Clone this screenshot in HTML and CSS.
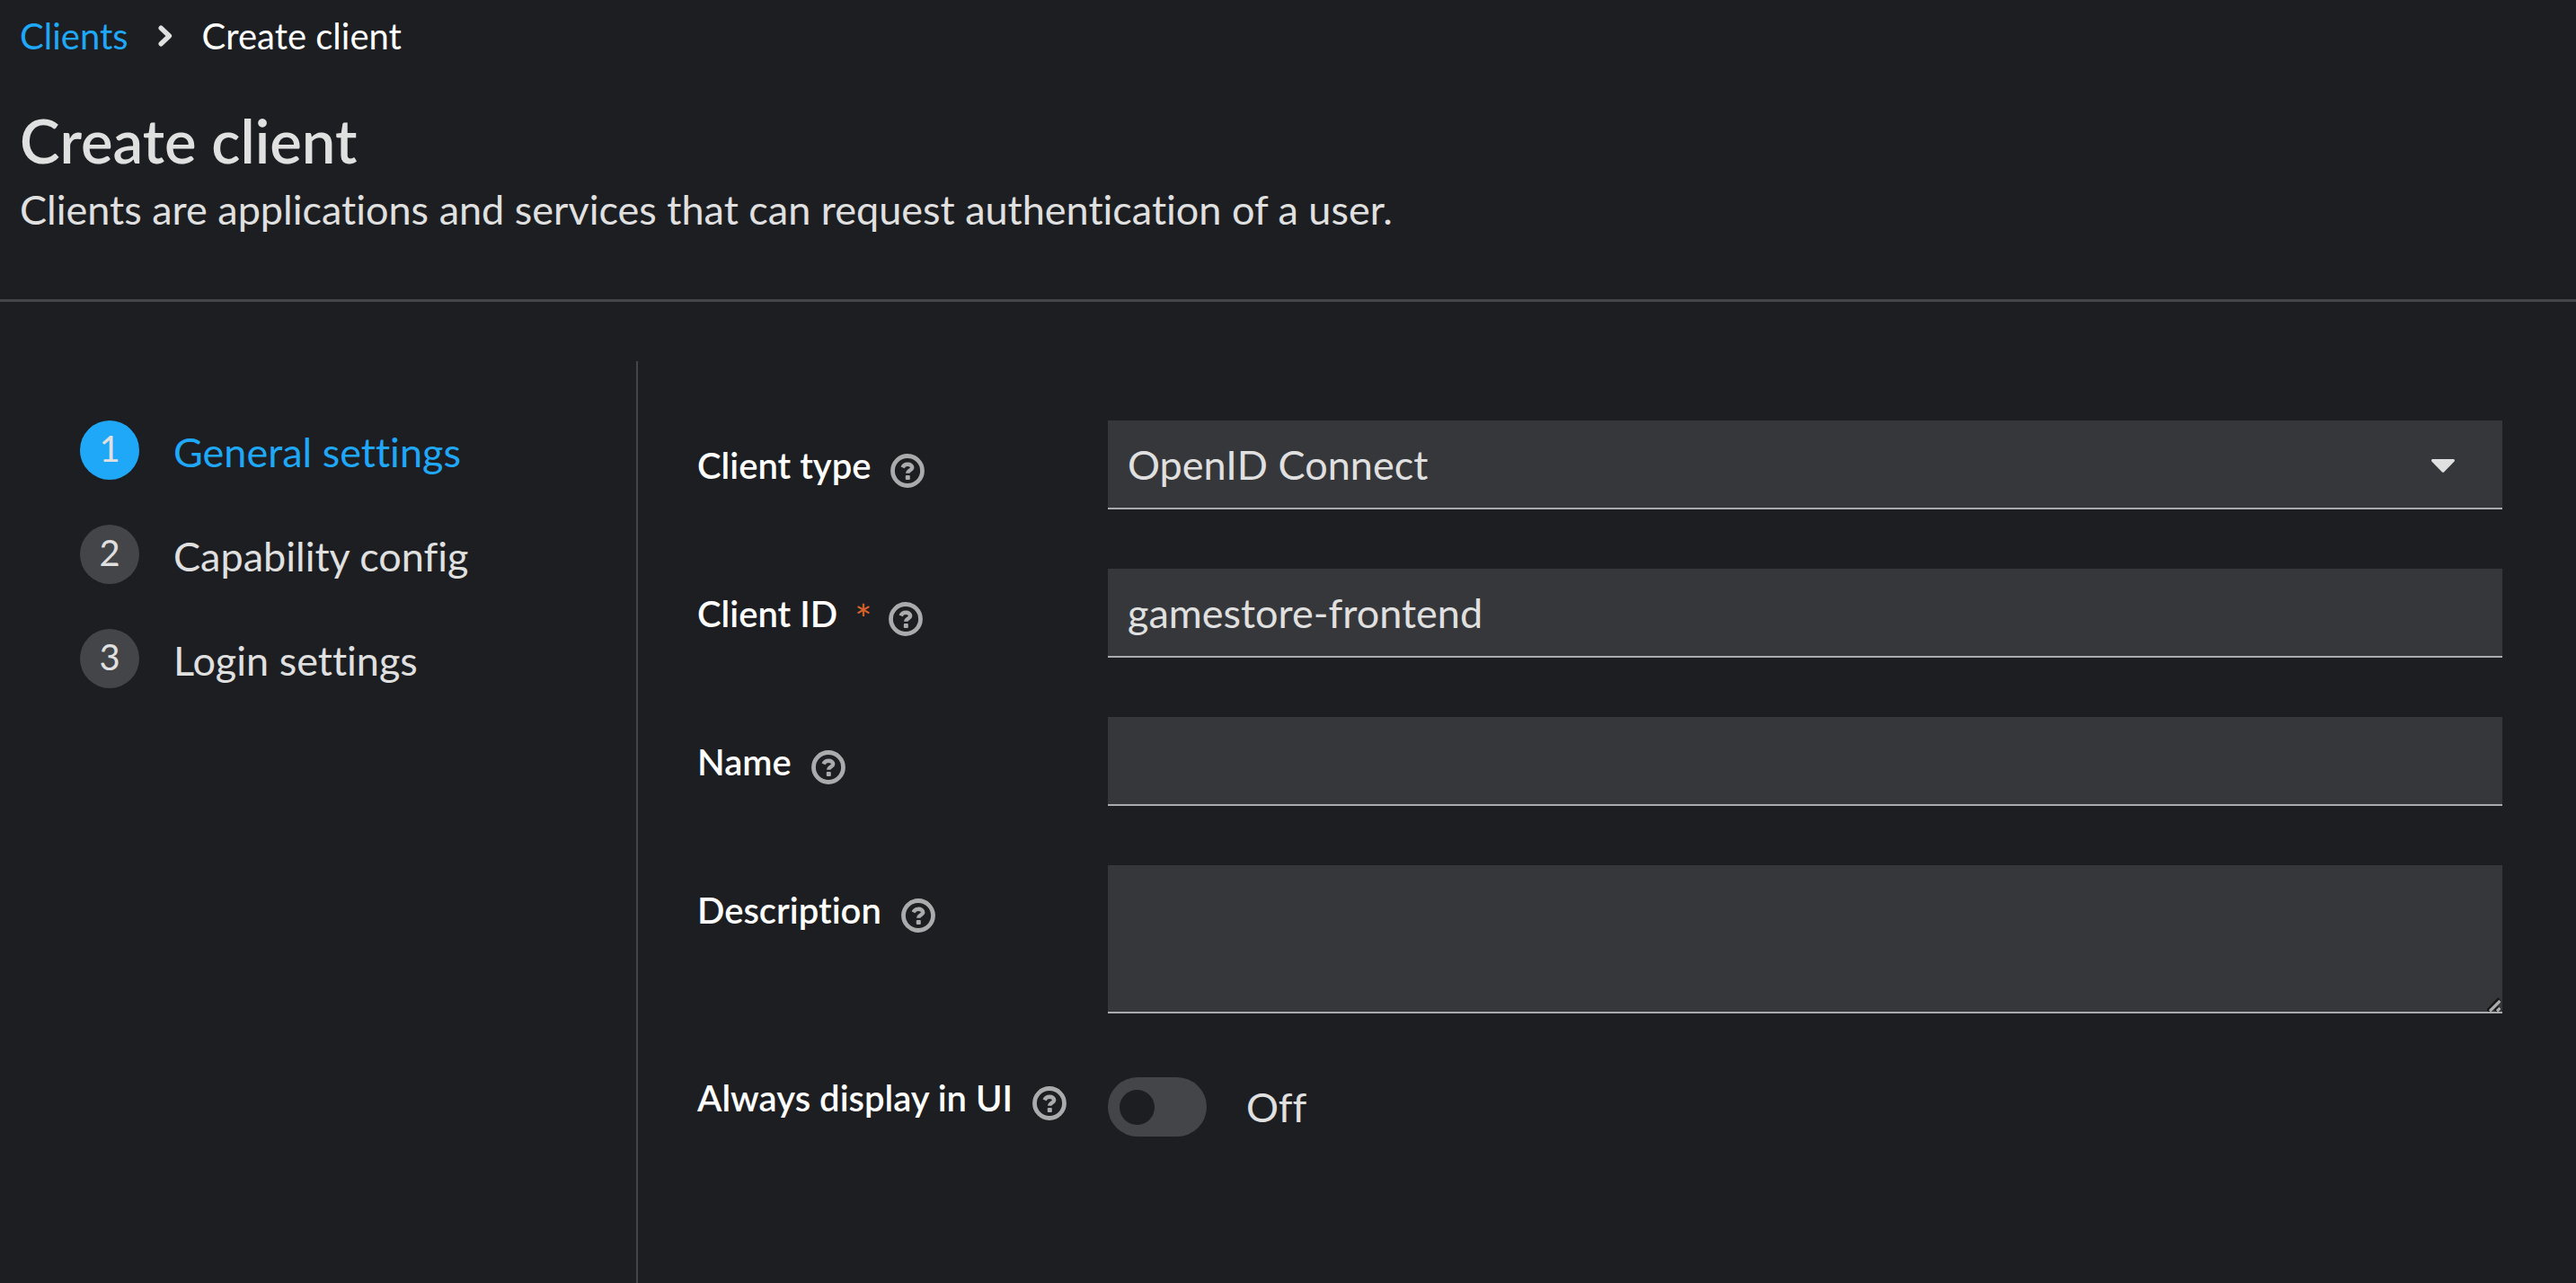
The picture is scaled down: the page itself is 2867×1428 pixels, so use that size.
FILE: index.html
```html
<!DOCTYPE html>
<html lang="en">
<head>
<meta charset="utf-8">
<meta name="viewport" content="width=device-width, initial-scale=1">
<title>Create client</title>
<link rel="stylesheet" href="styles.css">
</head>
<body>
<svg class="sprite" aria-hidden="true">
  <symbol id="icon-help" viewBox="0 0 38 38">
    <circle cx="19" cy="19" r="16.5" fill="none" stroke="currentColor" stroke-width="4.8"/>
    <path d="M13.6 15.4C14.6 12.9 16.5 11.8 19.2 11.8C22 11.8 24.2 13.2 24.2 15.5C24.2 18.6 19.3 18.2 19.3 21.8" fill="none" stroke="currentColor" stroke-width="4.4"/>
    <rect x="16.8" y="24" width="5" height="5" rx="1" fill="currentColor"/>
  </symbol>
</svg>
<div class="page">
  <header class="page-header">
    <nav aria-label="Breadcrumb">
      <ol class="breadcrumb">
        <li><a class="breadcrumb-link" href="#clients">Clients</a></li>
        <li class="breadcrumb-item">
          <svg class="breadcrumb-divider" viewBox="0 0 16 24" aria-hidden="true"><path d="M3.2 3.2L12.4 12L3.2 20.8" fill="none" stroke="currentColor" stroke-width="5.4" stroke-linecap="round" stroke-linejoin="round"/></svg>
          <span aria-current="page">Create client</span>
        </li>
      </ol>
    </nav>
    <h1 class="page-title">Create client</h1>
    <p class="page-subtitle">Clients are applications and services that can request authentication of a user.</p>
  </header>
  <div class="wizard">
    <nav class="wizard-nav" aria-label="Steps">
      <ol class="steps">
        <li><button class="step step-current" type="button" aria-current="step"><span class="step-number">1</span><span>General settings</span></button></li>
        <li><button class="step" type="button"><span class="step-number">2</span><span>Capability config</span></button></li>
        <li><button class="step" type="button"><span class="step-number">3</span><span>Login settings</span></button></li>
      </ol>
    </nav>
    <main class="wizard-main">
      <form class="form">
        <div class="row">
          <div class="row-label">
            <label for="client-type">Client type</label>
            <button class="help" type="button" aria-label="Help for client type"><svg><use href="#icon-help"/></svg></button>
          </div>
          <div class="select">
            <select class="control" id="client-type"><option>OpenID Connect</option><option>SAML</option></select>
            <svg class="caret" viewBox="0 0 26 15" aria-hidden="true"><path d="M1.6 0H24.4C26 0 26.4 1.8 25.4 2.8L14.2 14.2C13.5 15 12.5 15 11.8 14.2L.6 2.8C-.4 1.8 0 0 1.6 0Z" fill="currentColor"/></svg>
          </div>
        </div>
        <div class="row">
          <div class="row-label">
            <label for="client-id">Client ID</label>
            <span class="required" aria-hidden="true">*</span>
            <button class="help" type="button" aria-label="Help for client ID"><svg><use href="#icon-help"/></svg></button>
          </div>
          <input class="control" id="client-id" type="text" value="gamestore-frontend" required>
        </div>
        <div class="row">
          <div class="row-label">
            <label for="name">Name</label>
            <button class="help" type="button" aria-label="Help for name"><svg><use href="#icon-help"/></svg></button>
          </div>
          <input class="control" id="name" type="text">
        </div>
        <div class="row">
          <div class="row-label">
            <label for="description">Description</label>
            <button class="help" type="button" aria-label="Help for description"><svg><use href="#icon-help"/></svg></button>
          </div>
          <div class="textarea">
            <textarea class="control control-area" id="description"></textarea>
            <svg class="grip" viewBox="0 0 15 16" aria-hidden="true"><path d="M1 15.5L14 2M9.500 15.500L14 11.500" stroke="#151518" stroke-width="5"/><path d="M3 15.500L14.500 4M11 15.500L14.500 12" stroke="#aaabac" stroke-width="3.200"/></svg>
          </div>
        </div>
        <div class="row">
          <div class="row-label row-label-switch">
            <label for="always-display">Always display in UI</label>
            <button class="help" type="button" aria-label="Help for always display in UI"><svg><use href="#icon-help"/></svg></button>
          </div>
          <div class="switch-field">
            <input class="switch" id="always-display" type="checkbox" role="switch">
            <label for="always-display">Off</label>
          </div>
        </div>
      </form>
    </main>
  </div>
</div>
</body>
</html>
```
FILE: styles.css
```css
:root {
  --bg: #1d1e21;
  --field: #36373a;
  --line: #444548;
  --text: #e0e0e0;
  --muted: #aaabac;
  --accent: #1fa7f8;
}

* { box-sizing: border-box; }

body {
  margin: 0;
  background: var(--bg);
  color: var(--text);
  font-family: Lato, "Open Sans", sans-serif;
  font-size: 45px;
  font-variant-ligatures: none;
  line-height: 68px;
}

button, input, select, textarea { font: inherit; color: inherit; font-variant-ligatures: none; }
button { border: 0; padding: 0; background: none; cursor: pointer; }
ol { margin: 0; padding: 0; list-style: none; }

.sprite { display: none; }

.page { display: flex; flex-direction: column; min-height: 100vh; }

/* Header */
.page-header { padding: 11px 22px 66px; border-bottom: 3px solid var(--line); }

.breadcrumb { display: flex; gap: 33px; font-size: 40px; line-height: 58px; color: #fff; }
.breadcrumb-link { color: var(--accent); text-decoration: none; }
.breadcrumb-item { display: flex; align-items: center; gap: 33px; }
.breadcrumb-divider { width: 16px; height: 24px; color: var(--text); }

.page-title { margin: 44px 0 0; font-size: 67px; line-height: 86px; font-weight: 600; }
.page-subtitle { margin: 0; }

/* Wizard */
.wizard { display: flex; flex: 1; padding-top: 66px; }
.wizard-nav { flex: 0 0 710px; padding: 66px 89px; border-right: 2px solid var(--line); }
.wizard-main { flex: 1; padding: 66px 82px 66px 66px; }

.steps { display: flex; flex-direction: column; gap: 50px; }
.steps li { display: flex; }
.step { display: flex; align-items: flex-start; gap: 38px; height: 66px; line-height: 70px; }
.step-number {
  width: 66px;
  height: 66px;
  border-radius: 50%;
  background: var(--line);
  color: var(--text);
  font-size: 40px;
  line-height: 62px;
  text-align: center;
}
.step-current { color: var(--accent); }
.step-current .step-number { background: var(--accent); }

/* Form */
.form { display: grid; gap: 66px; }
.row { display: grid; grid-template-columns: 413px 1fr; column-gap: 44px; align-items: start; }

.row-label {
  display: flex;
  align-items: flex-end;
  gap: 22px;
  padding-top: 22px;
  color: #fff;
  font-size: 40px;
  font-weight: 600;
  line-height: 56px;
  white-space: nowrap;
}
.row-label-switch { padding-top: 0; }
.required { margin: 0 -3px; color: #d9622b; font-size: 45px; font-weight: 400; line-height: 46px; }

.help { height: 38px; margin-bottom: 3px; color: var(--muted); }
.help svg { display: block; width: 38px; height: 38px; }

.control {
  display: block;
  width: 100%;
  height: 99px;
  margin: 0;
  padding: 0 22px;
  border: 0;
  border-bottom: 2px solid var(--muted);
  border-radius: 0;
  outline: 0;
  background: var(--field);
  appearance: none;
}
.select, .textarea { position: relative; }
.caret {
  position: absolute;
  top: 43px;
  right: 53px;
  width: 26px;
  height: 15px;
  pointer-events: none;
}
.control-area { height: 165px; padding: 16px 22px; resize: vertical; }
.control-area::-webkit-resizer { background: transparent; }
.grip {
  position: absolute;
  right: 2px;
  bottom: 2px;
  width: 15px;
  height: 16px;
  pointer-events: none;
}

.switch-field { display: flex; align-items: center; gap: 44px; height: 66px; margin-top: 5px; }
.switch {
  display: flex;
  align-items: center;
  width: 110px;
  height: 66px;
  margin: 0;
  padding: 0 13px;
  border-radius: 33px;
  background: var(--line);
  appearance: none;
}
.switch::before { content: ""; width: 39px; height: 39px; border-radius: 50%; background: var(--bg); }
.switch:checked { justify-content: flex-end; background: var(--accent); }
```
